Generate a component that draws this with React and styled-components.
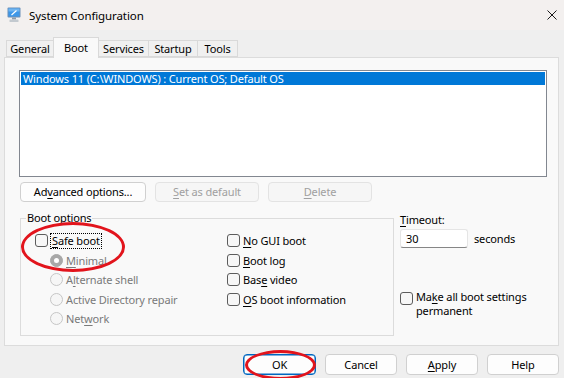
import React from "react";
import styled, { createGlobalStyle } from "styled-components";

const Global = createGlobalStyle`
  html, body { margin: 0; padding: 0; }
  body {
    background: #efefef;
    font-family: "Noto Sans", "Open Sans", sans-serif;
    font-size: 11px;
    letter-spacing: -0.15px;
    color: #000;
  }
  * { box-sizing: border-box; }
`;

const Window = styled.div`
  width: 564px;
  height: 378px;
  position: relative;
  overflow: hidden;
  background: #efefef;
  display: flex;
  flex-direction: column;
`;

const TitleBar = styled.div`
  height: 30px;
  flex: none;
  display: flex;
  align-items: center;
  padding: 0 7px 0 7px;
  background: #f3f0ef;
`;

const TitleText = styled.span`
  margin-left: 7px;
  font-size: 11.5px;
  letter-spacing: -0.1px;
`;

const CloseBox = styled.div`
  margin-left: auto;
  width: 10px;
  height: 10px;
  display: flex;
`;

const TabStrip = styled.div`
  height: 27px;
  flex: none;
  display: flex;
  align-items: flex-end;
  padding-left: 6px;
  position: relative;
  z-index: 1;
`;

const Tab = styled.div`
  width: ${(p) => p.$w}px;
  height: ${(p) => (p.$active ? 21 : 17)}px;
  margin-bottom: ${(p) => (p.$active ? -1 : 0)}px;
  margin-left: ${(p) => (p.$first ? 0 : -1)}px;
  border: 1px solid #d9d9d9;
  border-bottom: ${(p) => (p.$active ? "none" : "1px solid #d9d9d9")};
  background: ${(p) => (p.$active ? "#f9f9f9" : "#f0f0f0")};
  display: flex;
  justify-content: center;
  align-items: ${(p) => (p.$active ? "flex-start" : "center")};
  padding-top: ${(p) => (p.$active ? 2 : 0)}px;
  line-height: 15px;
  position: relative;
  z-index: ${(p) => (p.$active ? 2 : 0)};
`;

const Panel = styled.div`
  margin-left: 4px;
  width: 555px;
  height: 289px;
  flex: none;
  border: 1px solid #dcdcdc;
  background: #f9f9f9;
  padding: 12px 0 0 14px;
  display: flex;
  flex-direction: column;
`;

const ListBox = styled.div`
  width: 528px;
  height: 107px;
  border: 1px solid #828790;
  background: #fff;
  padding: 1px;
`;

const ListItem = styled.div`
  height: 13px;
  line-height: 13px;
  padding-left: 2px;
  background: ${(p) => (p.$selected ? "#0078d7" : "transparent")};
  color: ${(p) => (p.$selected ? "#fff" : "#000")};
  white-space: nowrap;
`;

const ButtonRow = styled.div`
  display: flex;
  gap: 9px;
  margin-top: 5px;
  margin-left: 1px;
`;

const Button = styled.div`
  width: ${(p) => p.$w}px;
  height: ${(p) => p.$h || 20}px;
  border: 1px solid ${(p) => (p.$default ? "#0067c0" : p.$disabled ? "#e3e3e3" : "#d0d0d0")};
  box-shadow: ${(p) => (p.$default ? "inset 0 0 0 0.5px #0067c0" : "none")};
  border-radius: 4px;
  background: ${(p) => (p.$disabled ? "#f6f6f6" : "#fdfdfd")};
  color: ${(p) => (p.$disabled ? "#a0a0a0" : "#000")};
  display: flex;
  align-items: center;
  justify-content: center;
  line-height: 14px;
  white-space: nowrap;
`;

const U = styled.span`
  text-decoration: underline;
  text-underline-offset: 2px;
  text-decoration-thickness: 1px;
`;

const LowerArea = styled.div`
  display: flex;
  margin-top: 9px;
  margin-left: 1px;
  gap: 6px;
`;

const GroupBox = styled.fieldset`
  margin: 0;
  width: 374px;
  height: 125px;
  border: 1px solid #dcdcdc;
  padding: 6px 0 0 14px;
  display: grid;
  grid-template-columns: 192px auto;
  align-content: start;
`;

const Legend = styled.legend`
  margin-left: -9px;
  padding: 0 1px;
  line-height: 14px;
`;

const Column = styled.div`
  display: flex;
  flex-direction: column;
`;

const OptionRow = styled.div`
  height: 19.5px;
  display: flex;
  align-items: center;
  padding-left: ${(p) => p.$indent || 0}px;
  color: ${(p) => (p.$disabled ? "#7a7a7a" : "#000")};
  white-space: nowrap;
`;

const CheckBox = styled.span`
  width: 13px;
  height: 13px;
  flex: none;
  border: 1px solid #5c5c5c;
  border-radius: 3px;
  background: #f7f7f7;
  margin-right: 3px;
  margin-top: ${(p) => p.$mt || 0}px;
`;

const Radio = styled.span`
  width: 13px;
  height: 13px;
  flex: none;
  border-radius: 50%;
  border: 1px solid ${(p) => (p.$checked ? "#a8a8a8" : "#c6c6c6")};
  background: ${(p) => (p.$checked ? "#a8a8a8" : "#f6f6f6")};
  margin-right: 3px;
  display: flex;
  align-items: center;
  justify-content: center;
  &::after {
    content: "";
    display: ${(p) => (p.$checked ? "block" : "none")};
    width: 5px;
    height: 5px;
    border-radius: 50%;
    background: #fff;
  }
`;

const FocusLabel = styled.span`
  outline: 1px dotted #000;
  outline-offset: 0px;
  padding: 0 1px;
  line-height: 14px;
`;

const SideColumn = styled.div`
  display: flex;
  flex-direction: column;
  padding-top: 1px;
`;

const FieldLabel = styled.div`
  line-height: 15px;
`;

const InputRow = styled.div`
  display: flex;
  align-items: center;
  gap: 6px;
  margin-top: 2px;
`;

const TextInput = styled.div`
  width: 68px;
  height: 19px;
  border: 1px solid #e5e5e5;
  border-bottom-color: #868686;
  border-radius: 3px;
  background: #fff;
  padding-left: 5px;
  display: flex;
  align-items: center;
`;

const PermanentRow = styled.div`
  display: flex;
  align-items: flex-start;
  margin-top: 42px;
`;

const Wrapped = styled.div`
  line-height: 13.5px;
  width: 128px;
`;

const Footer = styled.div`
  display: flex;
  justify-content: flex-end;
  gap: 9px;
  padding-right: 5px;
  margin-top: 8px;
`;

const Ring = styled.div`
  position: absolute;
  left: ${(p) => p.$x}px;
  top: ${(p) => p.$y}px;
  width: ${(p) => p.$w}px;
  height: ${(p) => p.$h}px;
  border: 3.5px solid #e2141c;
  border-radius: 50%;
  pointer-events: none;
`;

const AppIcon = () => (
  <svg width="15" height="16" viewBox="0 0 15 16">
    <rect x="0.5" y="0.5" width="13" height="10" rx="1" fill="#6d8fb8" />
    <rect x="1.5" y="1.5" width="11" height="8" fill="#3d97e8" />
    <rect x="1.5" y="1.5" width="11" height="3" fill="#6fb4f0" />
    <path d="M4.5 8 L9.5 3.5" stroke="#fff" strokeWidth="1.2" />
    <rect x="5" y="10.5" width="4" height="2" fill="#8d9aa8" />
    <rect x="2.5" y="12.5" width="9" height="2.5" rx="0.5" fill="#c3c9cf" />
  </svg>
);

const CloseIcon = () => (
  <svg width="10" height="10" viewBox="0 0 10 10">
    <path d="M0.5 0.5 L9.5 9.5 M9.5 0.5 L0.5 9.5" stroke="#1a1a1a" strokeWidth="1" />
  </svg>
);

export default function App() {
  return (
    <Window>
      <Global />
      <TitleBar>
        <AppIcon />
        <TitleText>System Configuration</TitleText>
        <CloseBox>
          <CloseIcon />
        </CloseBox>
      </TitleBar>

      <TabStrip>
        <Tab $w={48} $first>General</Tab>
        <Tab $w={46} $active>Boot</Tab>
        <Tab $w={51}>Services</Tab>
        <Tab $w={50}>Startup</Tab>
        <Tab $w={41}>Tools</Tab>
      </TabStrip>

      <Panel>
        <ListBox>
          <ListItem $selected>Windows 11 (C:\WINDOWS) : Current OS; Default OS</ListItem>
        </ListBox>

        <ButtonRow>
          <Button $w={126}>
            <span>Ad<U>v</U>anced options...</span>
          </Button>
          <Button $w={104} $disabled>
            <span><U>S</U>et as default</span>
          </Button>
          <Button $w={104} $disabled>
            <span><U>D</U>elete</span>
          </Button>
        </ButtonRow>

        <LowerArea>
          <GroupBox>
            <Legend>Boot options</Legend>
            <Column>
              <OptionRow>
                <CheckBox />
                <FocusLabel><U>S</U>afe boot</FocusLabel>
              </OptionRow>
              <OptionRow $indent={15} $disabled>
                <Radio $checked />
                <span><U>M</U>inimal</span>
              </OptionRow>
              <OptionRow $indent={15} $disabled>
                <Radio />
                <span>A<U>l</U>ternate shell</span>
              </OptionRow>
              <OptionRow $indent={15} $disabled>
                <Radio />
                <span>Active Directory repair</span>
              </OptionRow>
              <OptionRow $indent={15} $disabled>
                <Radio />
                <span>Net<U>w</U>ork</span>
              </OptionRow>
            </Column>
            <Column>
              <OptionRow>
                <CheckBox />
                <span><U>N</U>o GUI boot</span>
              </OptionRow>
              <OptionRow>
                <CheckBox />
                <span><U>B</U>oot log</span>
              </OptionRow>
              <OptionRow>
                <CheckBox />
                <span>Bas<U>e</U> video</span>
              </OptionRow>
              <OptionRow>
                <CheckBox />
                <span><U>O</U>S boot information</span>
              </OptionRow>
            </Column>
          </GroupBox>

          <SideColumn>
            <FieldLabel><U>T</U>imeout:</FieldLabel>
            <InputRow>
              <TextInput>30</TextInput>
              <span>seconds</span>
            </InputRow>
            <PermanentRow>
              <CheckBox $mt={2} />
              <Wrapped>Ma<U>k</U>e all boot settings permanent</Wrapped>
            </PermanentRow>
          </SideColumn>
        </LowerArea>
      </Panel>

      <Footer>
        <Button $w={73} $h={21} $default>OK</Button>
        <Button $w={72} $h={21}>Cancel</Button>
        <Button $w={72} $h={21}><span><U>A</U>pply</span></Button>
        <Button $w={72} $h={21}>Help</Button>
      </Footer>

      <Ring $x={21} $y={222} $w={104} $h={50} />
      <Ring $x={245} $y={350} $w={71} $h={30} />
    </Window>
  );
}
